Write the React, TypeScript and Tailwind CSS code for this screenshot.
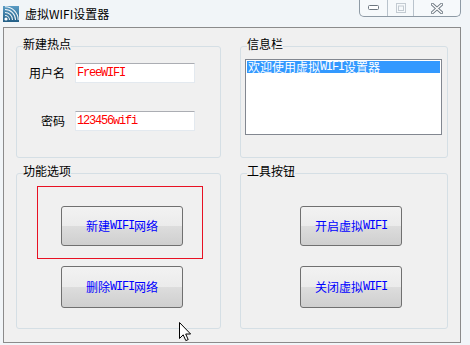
import type { ReactNode } from "react";

const cjk = "font-['Noto_Sans_CJK_SC',sans-serif]";

// latin runs rendered narrow like the bitmap ui font
function Mixed({ text }: { text: string }) {
  const parts = text.split(/([A-Za-z0-9]+)/);
  return (
    <>
      {parts.map((p, i) =>
        /^[A-Za-z0-9]+$/.test(p) ? (
          <span key={i} className="font-['Liberation_Mono',monospace] tracking-[-1.2px]">
            {p}
          </span>
        ) : (
          <span key={i}>{p}</span>
        )
      )}
    </>
  );
}

function Group({ title, children }: { title: string; children: ReactNode }) {
  return (
    <fieldset className="m-0 h-full min-w-0 rounded-[3px] border border-[#d5dfe5] p-0">
      <legend className="ml-[6px] px-0 pb-[4px] text-[12px] leading-[12px] text-black">
        {title}
      </legend>
      {children}
    </fieldset>
  );
}

function WinButton({ label, className }: { label: string; className: string }) {
  return (
    <button
      className={`flex items-center justify-center rounded-[3px] border border-[#707070] bg-[linear-gradient(to_bottom,#f2f2f2_0%,#ebebeb_50%,#dddddd_50%,#cfcfcf_100%)] text-[12px] leading-[12px] text-[#0000ff] ${className}`}
    >
      <Mixed text={label} />
    </button>
  );
}

function TextBox({ value }: { value: string }) {
  return (
    <div className="flex h-[20px] w-[120px] items-center border border-[#e3e9ef] border-t-[#abadb3] bg-white pl-[1px] text-[12px] leading-[12px] text-[#ff0000]">
      <Mixed text={value} />
    </div>
  );
}

function AppIcon() {
  return (
    <svg width="16" height="16" viewBox="0 0 16 16">
      <defs>
        <linearGradient id="ic" x1="0" y1="0" x2="0" y2="1">
          <stop offset="0" stopColor="#5a9cc4" />
          <stop offset="1" stopColor="#235f86" />
        </linearGradient>
      </defs>
      <rect x="0" y="0" width="16" height="16" fill="url(#ic)" />
      <g fill="none" stroke="#ffffff" strokeWidth="1.1" opacity="0.9">
        <path d="M2 9.5 A4.5 4.5 0 0 1 6.5 14" />
        <path d="M2 6.5 A7.5 7.5 0 0 1 9.5 14" />
        <path d="M2 3.5 A10.5 10.5 0 0 1 12.5 14" />
        <path d="M2 0.8 A13.2 13.2 0 0 1 15.2 14" />
      </g>
      <circle cx="3" cy="13" r="1.6" fill="#ffffff" />
    </svg>
  );
}

function CaptionButtons() {
  return (
    <div className="flex h-[17px] self-start rounded-b-[5px] border border-t-0 border-[#8e9aa5] bg-[#f6f9fb]">
      <div className="flex w-[28px] items-center justify-center border-r border-[#b9c3cc]">
        <svg width="12" height="6" viewBox="0 0 12 6">
          <rect x="0.5" y="0.5" width="10" height="4" rx="1" fill="#fff" stroke="#6d7780" />
        </svg>
      </div>
      <div className="flex w-[26px] items-center justify-center border-r border-[#b9c3cc]">
        <svg width="10" height="10" viewBox="0 0 10 10">
          <rect x="0.5" y="0.5" width="9" height="9" fill="none" stroke="#c3cbd2" />
          <rect x="2.5" y="3" width="5" height="4.5" fill="none" stroke="#c3cbd2" />
        </svg>
      </div>
      <div className="flex w-[46px] items-center justify-center">
        <svg width="12" height="11" viewBox="0 0 12 11">
          <path d="M1.5 1.5 L10.5 9.5 M10.5 1.5 L1.5 9.5" stroke="#6f7a84" strokeWidth="3.2" strokeLinecap="square" />
          <path d="M1.5 1.5 L10.5 9.5 M10.5 1.5 L1.5 9.5" stroke="#ffffff" strokeWidth="1.3" strokeLinecap="square" />
        </svg>
      </div>
    </div>
  );
}

export default function App() {
  return (
    <div className={`relative h-[345px] w-[470px] overflow-hidden bg-[#f1f5f8] ${cjk}`}>
      <div className="flex h-[27px] items-start justify-between pr-[9px]">
        <div className="flex h-[27px] items-center gap-[6px] pl-[3px]">
          <AppIcon />
          <span className="text-[12px] leading-[14px] text-black">
            <Mixed text="虚拟" />
            <span>WIFI设置器</span>
          </span>
        </div>
        <CaptionButtons />
      </div>

      <div className="ml-[3px] h-[316px] w-[458px] border border-[#8b8b8b] bg-[#f0f0f0] pl-[12px] pt-[10px]">
        <div className="grid grid-cols-[205px_208px] grid-rows-[120px_164px] gap-x-[19px] gap-y-[7px]">
          <Group title="新建热点">
            <div className="flex flex-col gap-[28px] pt-[9px]">
              <div className="flex items-center">
                <span className="w-[48px] text-right text-[12px] leading-[12px]">用户名</span>
                <div className="ml-[10px]">
                  <TextBox value="FreeWIFI" />
                </div>
              </div>
              <div className="flex items-center">
                <span className="w-[48px] text-right text-[12px] leading-[12px]">密码</span>
                <div className="ml-[10px]">
                  <TextBox value="123456wifi" />
                </div>
              </div>
            </div>
          </Group>

          <Group title="信息栏">
            <div className="ml-[4px] mt-[5px] h-[76px] w-[197px] border border-[#828790] bg-white p-px">
              <div className="flex h-[12px] items-center bg-[#3399ff] pl-[1px] text-[12px] leading-[12px] text-white">
                <Mixed text="欢迎使用虚拟WIFI设置器" />
              </div>
            </div>
          </Group>

          <Group title="功能选项">
            <div className="ml-[20px] mt-[5px] h-[73px] w-[166px] border border-[#e81123] pl-[23px] pt-[19px]">
              <WinButton label="新建WIFI网络" className="h-[40px] w-[122px]" />
            </div>
            <WinButton label="删除WIFI网络" className="ml-[44px] mt-[7px] h-[42px] w-[122px]" />
          </Group>

          <Group title="工具按钮">
            <div className="flex flex-col gap-[20px] pl-[59px] pt-[25px]">
              <WinButton label="开启虚拟WIFI" className="h-[40px] w-[102px]" />
              <WinButton label="关闭虚拟WIFI" className="h-[42px] w-[102px]" />
            </div>
          </Group>
        </div>
      </div>

      {/* mouse pointer */}
      <svg className="absolute left-[179px] top-[322px]" width="13" height="20" viewBox="0 0 13 20">
        <path d="M0.5 0.5 L0.5 16.5 L4.2 12.8 L6.8 18.6 L9.2 17.6 L6.7 12 L11.6 12 Z" fill="#ffffff" stroke="#000000" strokeLinejoin="round" />
      </svg>
    </div>
  );
}
